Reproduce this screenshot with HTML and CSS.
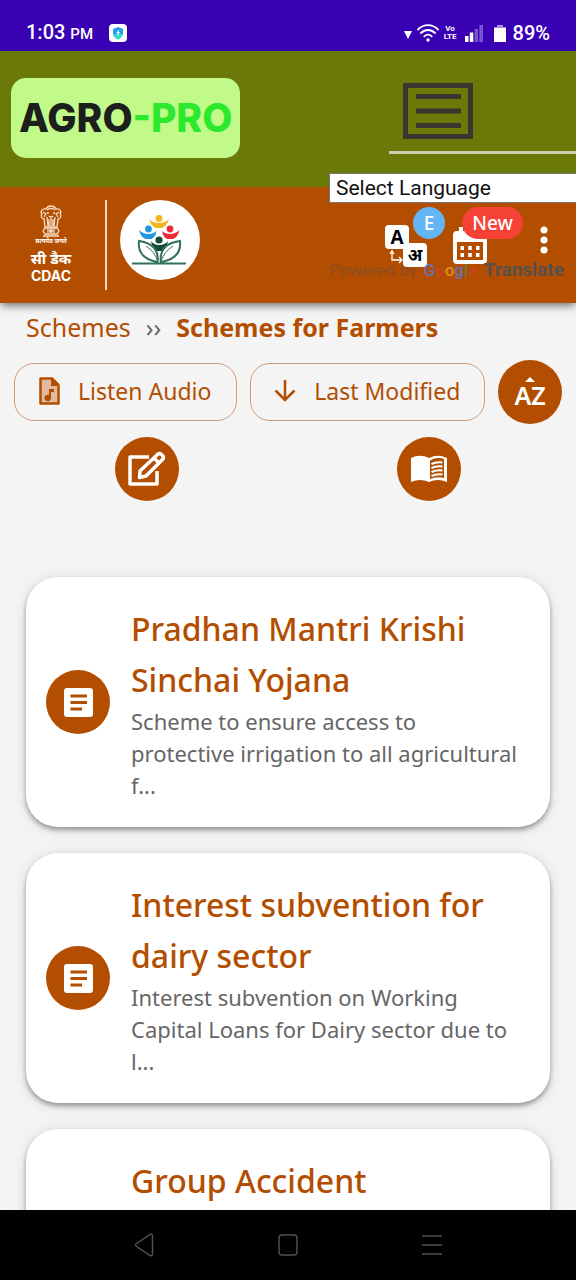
FILE: index.html
```html
<!DOCTYPE html>
<html lang="en">
<head>
<meta charset="utf-8">
<meta name="viewport" content="width=device-width, initial-scale=1">
<title>Schemes for Farmers</title>
<link rel="stylesheet" href="styles.css">
</head>
<body>
<div class="status-bar">
  <span class="clock">1:03 <small>PM</small></span>
  <svg class="shield" viewBox="0 0 18 18" width="18" height="18" aria-hidden="true"><rect width="18" height="18" rx="4" fill="#fff"/><path d="M9 3l5 2v4c0 3-2 5-5 6.500C6 14 4 12 4 9V5z" fill="#1d9bf0"/><path d="M4.300 10c.6 2.500 2.400 4 4.700 5.500 2.500-1.300 4.200-3 4.800-5.500z" fill="#35dccb"/><path d="M10 5.500L7 9h1.800L8 12l3.200-3.800H9.400z" fill="#fff"/></svg>
  <div class="indicators">
    <svg viewBox="0 0 8 8" width="8" height="8" class="caret" aria-hidden="true"><path d="M0 0h8L4 8z" fill="#fff"/></svg>
    <svg viewBox="0 0 22 18" width="22" height="18" aria-hidden="true"><g fill="none" stroke="#fff" stroke-width="1.800" stroke-linecap="round"><path d="M1 5.500C7-.3 15-.3 21 5.500M4 9c4-4 10-4 14 0M7.300 12.300c2.200-2 5.200-2 7.400 0"/></g><circle cx="11" cy="16" r="1.700" fill="#fff"/></svg>
    <span class="volte">Vo<br>LTE</span>
    <svg viewBox="0 0 18 17" width="18" height="17" class="signal" aria-hidden="true"><path d="M0 11h3.500v6H0zM4.800 7.500h3.500V17H4.800z" fill="#fff"/><path d="M9.600 4h3.500v13H9.600zM14.400 0H18v17h-3.600z" fill="#7a54cf"/></svg>
    <svg viewBox="0 0 12 17" width="12" height="17" class="battery" aria-hidden="true"><path d="M3 0h6v2h3v2H0V2h3z" fill="#a98be6"/><path d="M0 3h12v14H0z" fill="#fff"/></svg>
    <span>89%</span>
  </div>
</div>

<header class="brand-bar">
  <a class="brand" href="#">AGRO<span>-PRO</span></a>
  <div class="menu-area">
    <button class="menu-button" aria-label="Menu">
      <svg viewBox="0 0 70 56" width="70" height="56" fill="none" stroke="#37362f" stroke-width="5" aria-hidden="true"><path d="M2.500 2.500h65v51h-65zM13 13.500h45M13 28h45M13 42.500h45"/></svg>
    </button>
  </div>
  <div class="translate">
    <select aria-label="Language"><option>Select Language</option></select>
    <p class="powered"><span class="by">Powered by</span> <span class="google"><b class="g1">G</b><b class="g2">o</b><b class="g3">o</b><b class="g1">g</b><b class="g4">l</b><b class="g2">e</b></span> <strong>Translate</strong></p>
  </div>
</header>

<div class="app-bar">
  <div class="agency">
    <svg viewBox="0 0 24 32" width="24" height="32" aria-hidden="true"><g fill="none" stroke="#f6dcc8" stroke-width="1.300"><path d="M7 4C3 3 1 7 3 9c-2 2 0 5 2 5l1 8h12l1-8c2 0 4-3 2-5 2-2 0-6-4-5-2-4-8-4-10 0z"/><path d="M8 5c2-2 6-2 8 0M8 8h2M14 8h2M10 11q2 2 4 0M4 7l3 2-2 3M20 7l-3 2 2 3M8 12l1 9M12 13v8M16 12l-1 9M10 14v7M14 14v7"/><path d="M6 23h12l2 3-2 3H6l-2-3zM4 31h16M9 24v4M15 24v4"/></g><circle cx="12" cy="26" r="2" fill="#f6dcc8"/></svg>
    <span class="motto">सत्यमेव जयते</span>
    <span class="agency-hi">सी डैक</span>
    <span class="agency-en">CDAC</span>
  </div>
  <svg class="scheme-logo" viewBox="0 0 80 80" width="80" height="80" role="img" aria-label="People and leaves logo">
    <circle cx="40" cy="40" r="40" fill="#fff"/>
    <g fill="#f5b51c"><circle cx="39" cy="18.500" r="3.400"/><path d="M29 19q4 4 10 4 6 0 10-4-2 7-7 9h-6q-5-2-7-9z"/></g>
    <g fill="#2497e3"><circle cx="28.500" cy="29" r="3.400"/><path d="M19 30q4 4 9.500 4 5 0 8-3-1 6-5 8h-6q-5-2-6.500-9z"/></g>
    <g fill="#ec2a3a"><circle cx="50" cy="29" r="3.400"/><path d="M59.500 30q-4 4-9.500 4-5 0-8-3 1 6 5 8h6q5-2 6.500-9z"/></g>
    <g fill="#134c36"><circle cx="39" cy="40" r="3.600"/><path d="M31 41q3 4 8 4 6 0 9-4-1 7-6 10h-5q-5-3-6-10z"/></g>
    <g fill="none" stroke="#35705d" stroke-width="2"><path d="M12 63.500h54M37.500 63Q40 44 19 41q-2 17 18 21M41 63Q38 44 60 41q2 17-18.500 21"/><path d="M26 46q9 6 11.500 15M53 46q-9 6-12 15" stroke-width="1"/></g>
  </svg>
  <div class="tools">
    <button class="tool lang" aria-label="Change language">
      <svg viewBox="0 0 42 42" width="42" height="42" aria-hidden="true"><rect width="24" height="24" rx="4" fill="#fff"/><rect x="18" y="18" width="24" height="24" rx="4" fill="#fff"/><path d="M7 27v8h9M5 29l2-3 2 3M14 32l3 3-3 3" fill="none" stroke="#fff" stroke-width="1.300"/><text x="12" y="19" class="glyph-a">A</text><text x="30" y="36" class="glyph-hi">अ</text></svg>
      <span class="badge badge-lang">E</span>
    </button>
    <button class="tool events" aria-label="Events">
      <svg viewBox="0 0 34 37" width="34" height="37" aria-hidden="true"><path d="M4 4h2V0h4v4h14V0h4v4h2q4 0 4 4v25q0 4-4 4H4q-4 0-4-4V8q0-4 4-4z" fill="#fff"/><path d="M4 15h26v18H4z" fill="#b34e00"/><path d="M7.500 19H11v4H7.500zM15.200 19h3.600v4h-3.600zM23 19h3.500v4H23zM7.500 26H11v4H7.500zM15.200 26h3.600v4h-3.600zM23 26h3.500v4H23z" fill="#fff"/></svg>
      <span class="badge badge-new">New</span>
    </button>
    <button class="tool more" aria-label="More options">
      <svg viewBox="0 0 8 28" width="8" height="28" fill="#fff" aria-hidden="true"><circle cx="4" cy="4" r="3.500"/><circle cx="4" cy="14" r="3.500"/><circle cx="4" cy="24" r="3.500"/></svg>
    </button>
  </div>
</div>

<main class="content">
  <nav class="breadcrumb" aria-label="Breadcrumb"><a href="#">Schemes</a><span class="separator">››</span><strong>Schemes for Farmers</strong></nav>
  <div class="filters">
    <button class="outlined listen">
      <svg viewBox="0 0 22 28" width="22" height="28" aria-hidden="true"><path d="M2.500 1.500H14L20.500 8v18.500h-18z" fill="#e1bba0" stroke="#b34e00" stroke-width="2.500" stroke-linejoin="round"/><path d="M13 1l8 8h-8z" fill="#b34e00"/><path d="M11 12h5v3h-3v6a3.300 3.300 0 1 1-2-3z" fill="#b34e00"/></svg>
      Listen Audio
    </button>
    <button class="outlined modified">
      <svg viewBox="0 0 22 22" width="22" height="22" fill="none" stroke="#b34e00" stroke-width="2.500" aria-hidden="true"><path d="M11 0v20M1.500 10.500L11 20l9.500-9.500"/></svg>
      Last Modified
    </button>
    <button class="round sort" aria-label="Sort A to Z">
      <svg viewBox="0 0 10 5" width="10" height="5" aria-hidden="true"><path d="M0 5L5 0l5 5z" fill="#fff"/></svg>
      <span>AZ</span>
    </button>
  </div>
  <div class="actions">
    <button class="round" aria-label="Edit">
      <svg viewBox="0 0 40 36" width="40" height="36" fill="none" stroke="#fff" stroke-width="3.500" stroke-linejoin="round" aria-hidden="true"><path d="M22 6H3v27h27V20" stroke-linecap="butt"/><path d="M13 20L30.500 3.500q2-1.800 4 0l1 1q2 2 0 4L19 25l-6.500 1.500zM27 7l5 5"/></svg>
    </button>
    <button class="round" aria-label="Read">
      <svg viewBox="0 0 36 28" width="36" height="28" aria-hidden="true"><path d="M0 3Q9-1.500 18 3q9-4.500 18 0v24q-9-4-18 0-9-4-18 0z" fill="#fff"/><path d="M19 5.500q7-4 14-1.500v19q-7-2-14 1z" fill="#b34e00"/><path d="M20.500 9q5-2.500 11-1.500M20.500 13q5-2.500 11-1.500M20.500 17q5-2.500 11-1.500M20.500 21q5-2.500 11-1.500" stroke="#fff" stroke-width="2" fill="none"/></svg>
    </button>
  </div>

  <div class="schemes">
    <article class="card">
      <span class="round"><svg viewBox="0 0 29 29" width="29" height="29" aria-hidden="true"><rect width="29" height="29" rx="3" fill="#fff"/><path d="M6.500 8H23M6.500 14.500H23M6.500 21H18" stroke="#b34e00" stroke-width="3"/></svg></span>
      <div><h2>Pradhan Mantri Krishi Sinchai Yojana</h2><p>Scheme to ensure access to protective irrigation to all agricultural f...</p></div>
    </article>
    <article class="card">
      <span class="round"><svg viewBox="0 0 29 29" width="29" height="29" aria-hidden="true"><rect width="29" height="29" rx="3" fill="#fff"/><path d="M6.500 8H23M6.500 14.500H23M6.500 21H18" stroke="#b34e00" stroke-width="3"/></svg></span>
      <div><h2>Interest subvention for dairy sector</h2><p>Interest subvention on Working Capital Loans for Dairy sector due to l...</p></div>
    </article>
    <article class="card last">
      <div><h2>Group Accident</h2></div>
    </article>
  </div>
</main>

<nav class="system-nav" aria-label="System">
  <button aria-label="Back"><svg viewBox="0 0 20 24" width="20" height="24"><path d="M2 11L16 1.500q2.500-1 2.500 2v17q0 3-2.500 2L2 13q-1-1 0-2z"/></svg></button>
  <button aria-label="Home"><svg viewBox="0 0 20 22" width="20" height="22"><rect x="1" y="1" width="18" height="20" rx="3"/></svg></button>
  <button aria-label="Recent apps"><svg viewBox="0 0 20 20" width="20" height="20"><path d="M0 1h20M0 10h20M0 19h20"/></svg></button>
</nav>
</body>
</html>
```
FILE: styles.css
```css
* { box-sizing: border-box; }

body {
  margin: 0;
  height: 100vh;
  display: flex;
  flex-direction: column;
  overflow: hidden;
  background: #f4f4f4;
  color: #b34e00;
  font-family: "Noto Sans", "Open Sans", sans-serif;
}

button {
  padding: 0;
  border: 0;
  background: none;
  color: inherit;
  font: inherit;
}

a { color: inherit; text-decoration: none; }
svg { display: block; flex: none; }

.status-bar {
  flex: none;
  display: flex;
  align-items: center;
  gap: 16px;
  padding: 15px 26px 0;
  height: 51px;
  background: #3a00b3;
  color: #fff;
  font: 500 20px/24px Roboto, sans-serif;
}
.clock small { font-size: 15px; }
.indicators { display: flex; align-items: center; margin-left: auto; gap: 5px; }
.caret { margin-top: 4px; }
.volte { font: 700 8px/8px Roboto, sans-serif; text-align: center; }
.signal { margin: 0 6px 0 3px; }
.battery { margin-right: 2px; }

.brand-bar {
  flex: none;
  position: relative;
  z-index: 2;
  display: flex;
  align-items: flex-start;
  justify-content: space-between;
  padding: 27px 0 0 11px;
  height: 136px;
  background: #6b7908;
}
.brand {
  padding: 0 8px;
  border-radius: 15px;
  background: #c1fa89;
  color: #1d1f1c;
  font: 800 39px/80px Inter, sans-serif;
}
.brand span { color: #2ce92c; }
.menu-area {
  width: 187px;
  height: 76px;
  padding: 5px 14px;
  border-bottom: 3px solid #cdccae;
}
.translate {
  position: absolute;
  top: 122px;
  left: calc(100% - 247px);
  right: 0;
  overflow: hidden;
  font-family: Roboto, sans-serif;
}
.translate select {
  appearance: none;
  display: block;
  width: calc(100% + 8px);
  height: 30px;
  padding: 0 6px;
  border: 1px solid #767676;
  border-radius: 0;
  background: #fff;
  color: #111;
  font: 21px/28px Roboto, sans-serif;
}
.powered {
  display: flex;
  justify-content: space-between;
  margin: 55px 12px 0 0;
  font-size: 17px;
  line-height: 24px;
  color: #55504d;
}
.powered .by { color: #8c4d20; }
.powered strong { font-size: 19px; }
.google b { font-weight: 500; }
.g1 { color: #6271b5; }
.g2 { color: #c6452b; }
.g3 { color: #dd8e10; }
.g4 { color: #6f7833; }

.app-bar {
  flex: none;
  position: relative;
  z-index: 1;
  display: flex;
  align-items: flex-start;
  gap: 13px;
  padding: 13px 28px 13px 0;
  height: 116px;
  background: #b34e00;
  box-shadow: 0 4px 8px -1px #777;
}
.agency {
  display: flex;
  flex-direction: column;
  align-items: center;
  width: 107px;
  height: 90px;
  padding: 5px 3px 0 0;
  border-right: 2px solid #f0d8c8;
  color: #fff;
}
.motto { font-size: 6px; line-height: 9px; font-weight: 700; }
.agency-hi { margin-top: 4px; font-size: 15px; line-height: 17px; font-weight: 700; }
.agency-en { font: 700 14px/17px Inter, sans-serif; }
.tools { display: flex; align-items: flex-start; margin-left: auto; }
.tool { position: relative; color: #fff; }
.lang { margin: 25px 26px 0 0; }
.events { margin: 27px 53px 0 0; }
.more { margin-top: 26px; }
.glyph-a { font: 700 19px "Open Sans", sans-serif; text-anchor: middle; }
.glyph-hi { font: 700 17px "Noto Sans", sans-serif; text-anchor: middle; }
.badge {
  position: absolute;
  height: 32px;
  border-radius: 16px;
  font-size: 19px;
  line-height: 32px;
  font-weight: 500;
  text-align: center;
}
.badge-lang { top: -18px; left: 28px; width: 32px; background: #64b5f6; }
.badge-new { top: -20px; left: 9px; width: 61px; background: #f44336; }

.content { flex: 1; min-height: 0; overflow: hidden; }
.breadcrumb {
  display: flex;
  padding: 4px 26px 0;
  font-size: 25px;
  line-height: 40px;
}
.separator { margin: 0 15px; color: #666; }
.filters {
  display: flex;
  align-items: center;
  gap: 13px;
  padding: 13px 14px 0;
}
.outlined {
  display: flex;
  align-items: center;
  height: 58px;
  padding-bottom: 2px;
  border: 1px solid #d19b77;
  border-radius: 20px;
  font-size: 23px;
  white-space: nowrap;
}
.listen { flex: 222; padding-left: 23px; gap: 18px; }
.modified { flex: 235; padding-left: 23px; gap: 18px; }
.round {
  flex: none;
  display: grid;
  place-items: center;
  width: 64px;
  height: 64px;
  border-radius: 50%;
  background: #b34e00;
}
.sort { place-content: center; color: #fff; font-size: 25px; line-height: 26px; font-weight: 600; }
.actions {
  display: grid;
  grid-template-columns: 1fr 1fr;
  justify-items: center;
  padding: 13px 6px 0;
}
.schemes {
  display: grid;
  gap: 26px;
  padding: 76px 26px 0;
}
.card {
  display: flex;
  align-items: center;
  gap: 21px;
  padding: 26px 26px 26px 20px;
  border-radius: 32px;
  background: #fff;
  box-shadow: 0 3px 5px rgba(0, 0, 0, .35), 0 2px 16px rgba(0, 0, 0, .1);
}
.card.last { padding-left: 105px; padding-bottom: 123px; }
.card h2 { margin: 0; font-size: 32px; line-height: 51px; font-weight: 500; }
.card p { margin: 0; color: #666; font-size: 22px; line-height: 32px; }

.system-nav {
  flex: none;
  position: relative;
  display: flex;
  justify-content: center;
  height: 70px;
  background: #000;
}
.system-nav button { width: 25%; display: grid; place-items: center; }
.system-nav svg { fill: none; stroke: #505050; stroke-width: 1.500; }
```
